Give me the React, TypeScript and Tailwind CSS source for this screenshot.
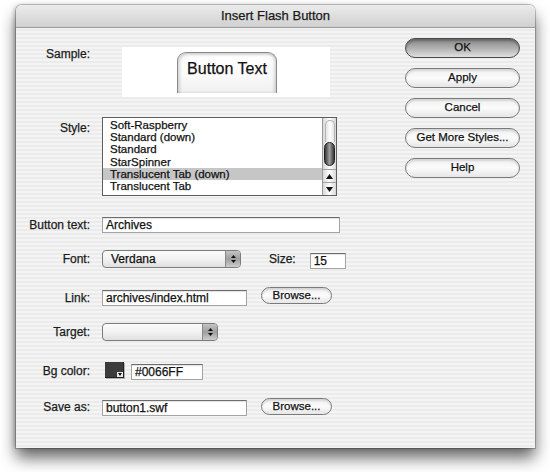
import React from "react";

const Label = ({ children, className = "" }: { children: React.ReactNode; className?: string }) => (
  <div className={`w-[74px] shrink-0 text-right text-[12px] text-[#1c1c1c] ${className}`}>{children}</div>
);

const AquaButton = ({
  children,
  primary = false,
  className = "",
}: {
  children: React.ReactNode;
  primary?: boolean;
  className?: string;
}) => (
  <div
    className={`flex items-center justify-center rounded-full border text-[11.5px] text-[#111] ${
      primary
        ? "border-[#4a4a4a] bg-linear-to-b from-[#858585] via-[#b0b0b0] to-[#e0e0e0] shadow-[inset_0_2px_2px_rgba(0,0,0,0.25)]"
        : "border-[#7a7a7a] bg-linear-to-b from-[#f0f0f0] via-[#fbfbfb] to-[#e6e6e6] shadow-[inset_0_2px_2px_rgba(0,0,0,0.12)]"
    } ${className}`}
  >
    {children}
  </div>
);

const Field = ({ value, className = "" }: { value: string; className?: string }) => (
  <div
    className={`h-[16px] shrink-0 border border-[#a4a4a4] border-t-[#6c6c6c] bg-white pl-[3px] text-[12px] leading-[14px] text-[#111] shadow-[inset_0_1px_1px_rgba(0,0,0,0.12)] ${className}`}
  >
    {value}
  </div>
);

const Stepper = () => (
  <div className="flex w-[15px] flex-col items-center justify-center gap-[2px] border-l border-[#8a8a8a] bg-linear-to-b from-[#c4c4c4] via-[#9e9e9e] to-[#cdcdcd]">
    <svg width="5" height="3" viewBox="0 0 5 3">
      <path d="M0 3 L2.5 0 L5 3 Z" fill="#111" />
    </svg>
    <svg width="5" height="3" viewBox="0 0 5 3">
      <path d="M0 0 L2.5 3 L5 0 Z" fill="#111" />
    </svg>
  </div>
);

const Popup = ({ value, className = "" }: { value: string; className?: string }) => (
  <div
    className={`flex h-[18px] shrink-0 overflow-hidden rounded-[4px] border border-[#7c7c7c] bg-linear-to-b from-[#fbfbfb] via-[#f2f2f2] to-[#e0e0e0] ${className}`}
  >
    <div className="flex-1 pl-[8px] text-[12px] leading-[16px] text-[#111]">{value}</div>
    <Stepper />
  </div>
);

const styles = [
  "Soft-Raspberry",
  "Standard (down)",
  "Standard",
  "StarSpinner",
  "Translucent Tab (down)",
  "Translucent Tab",
];

export default function App() {
  return (
    <div className="h-[472px] w-[550px] bg-white pl-[16px] pt-[5px] font-['Liberation_Sans',Arial,sans-serif] [-webkit-text-stroke:0.25px]">
      <div className="h-[443px] w-[519px] overflow-hidden rounded-t-[6px] bg-[repeating-linear-gradient(to_bottom,#ebebeb_0px,#ebebeb_2px,#f4f4f4_2px,#f4f4f4_4px)] shadow-[0_0_0_1px_rgba(0,0,0,0.2),-2px_0_4px_rgba(0,0,0,0.2),0_10px_16px_rgba(0,0,0,0.6)]">
        {/* title bar */}
        <div className="flex h-[23px] items-center justify-center border-b border-[#9a9a9a] bg-linear-to-b from-[#ececec] to-[#d0d0d0] text-[13px] text-[#1a1a1a]">
          Insert Flash Button
        </div>

        <div className="flex">
          {/* form */}
          <div className="flex w-[389px] flex-col">
            <div className="mt-[19px] flex gap-[12px]">
              <Label className="leading-[14px]">Sample:</Label>
              <div className="ml-[20px] h-[50px] w-[208px] bg-white pt-[5px]">
                <div className="ml-[55px] h-[41px] w-[100px] rounded-t-[9px] border border-b-0 border-[#8a8a8a] bg-linear-to-b from-white via-[#fbfbfb] to-[#f0f0f0] pt-[7px] text-center text-[16px] leading-[18px] text-[#111] shadow-[inset_2px_2px_3px_rgba(0,0,0,0.15),inset_-2px_0_3px_rgba(0,0,0,0.15)]">
                  Button Text
                </div>
              </div>
            </div>

            <div className="mt-[20px] flex gap-[12px]">
              <Label className="pt-[4px] leading-[14px]">Style:</Label>
              <div className="flex h-[79px] w-[235px] border border-[#5e5e5e] bg-white">
                <div className="flex-1 pt-[1px]">
                  {styles.map((s) => (
                    <div
                      key={s}
                      className={`h-[12.2px] pl-[7px] text-[11.5px] leading-[12.2px] text-[#111] ${
                        s === "Translucent Tab (down)" ? "bg-[#c6c6c6]" : ""
                      }`}
                    >
                      {s}
                    </div>
                  ))}
                </div>
                <div className="flex w-[14px] flex-col border-l border-[#9a9a9a] bg-linear-to-r from-[#d8d8d8] via-white to-[#d8d8d8]">
                  <div className="mx-auto mt-[2px] h-[22px] w-[10px] rounded-t-full border border-b-0 border-[#b4b4b4] bg-linear-to-r from-[#e4e4e4] via-white to-[#e4e4e4]" />
                  <div className="mx-auto h-[24px] w-[11px] rounded-full border border-[#1e1e1e] bg-linear-to-r from-[#3a3a3a] via-[#a0a0a0] to-[#3a3a3a]" />
                  <div className="flex-1" />
                  <div className="flex h-[13px] items-center justify-center border-t border-[#a0a0a0]">
                    <svg width="7" height="5" viewBox="0 0 7 5">
                      <path d="M0 5 L3.5 0 L7 5 Z" fill="#111" />
                    </svg>
                  </div>
                  <div className="flex h-[13px] items-center justify-center border-t border-[#a0a0a0]">
                    <svg width="7" height="5" viewBox="0 0 7 5">
                      <path d="M0 0 L3.5 5 L7 0 Z" fill="#111" />
                    </svg>
                  </div>
                </div>
              </div>
            </div>

            <div className="mt-[21px] flex items-center gap-[12px]">
              <Label className="leading-[16px]">Button text:</Label>
              <Field value="Archives" className="w-[238px]" />
            </div>

            <div className="mt-[17px] flex items-start gap-[12px]">
              <Label className="leading-[18px]">Font:</Label>
              <Popup value="Verdana" className="w-[139px]" />
              <div className="ml-[16px] text-[12px] leading-[18px] text-[#1c1c1c]">Size:</div>
              <Field value="15" className="ml-[2px] mt-[3px] w-[36px]" />
            </div>

            <div className="mt-[18px] flex items-start gap-[12px]">
              <Label className="mt-[3px] leading-[16px]">Link:</Label>
              <Field value="archives/index.html" className="mt-[3px] w-[145px]" />
              <AquaButton className="ml-[2px] h-[17px] w-[71px]">Browse...</AquaButton>
            </div>

            <div className="mt-[17px] flex items-center gap-[12px]">
              <Label className="leading-[18px]">Target:</Label>
              <Popup value="" className="w-[116px]" />
            </div>

            <div className="mt-[21px] flex items-start gap-[12px]">
              <Label className="leading-[18px]">Bg color:</Label>
              <div className="ml-[3px] flex items-start gap-[7px]">
                <div className="relative h-[16px] w-[19px] border-r border-b border-[#222] bg-[#3c3c3c] shadow-[1px_1px_0_rgba(0,0,0,0.25)]">
                  <div className="absolute right-0 bottom-0 flex h-[5px] w-[6px] items-center justify-center bg-[#e8e8e8]">
                    <svg width="4" height="3" viewBox="0 0 4 3">
                      <path d="M0 0 L2 3 L4 0 Z" fill="#111" />
                    </svg>
                  </div>
                </div>
                <Field value="#0066FF" className="mt-[2px] w-[72px]" />
              </div>
            </div>

            <div className="mt-[18px] flex items-start gap-[12px]">
              <Label className="leading-[18px]">Save as:</Label>
              <Field value="button1.swf" className="mt-[2px] w-[145px]" />
              <AquaButton className="ml-[2px] h-[17px] w-[71px]">Browse...</AquaButton>
            </div>
          </div>

          {/* buttons */}
          <div className="flex w-[115px] flex-col gap-[10px] pt-[10px]">
            <AquaButton primary className="h-[20px]">OK</AquaButton>
            <AquaButton className="h-[20px]">Apply</AquaButton>
            <AquaButton className="h-[20px]">Cancel</AquaButton>
            <AquaButton className="h-[20px]">Get More Styles...</AquaButton>
            <AquaButton className="h-[20px]">Help</AquaButton>
          </div>
        </div>
      </div>
    </div>
  );
}
